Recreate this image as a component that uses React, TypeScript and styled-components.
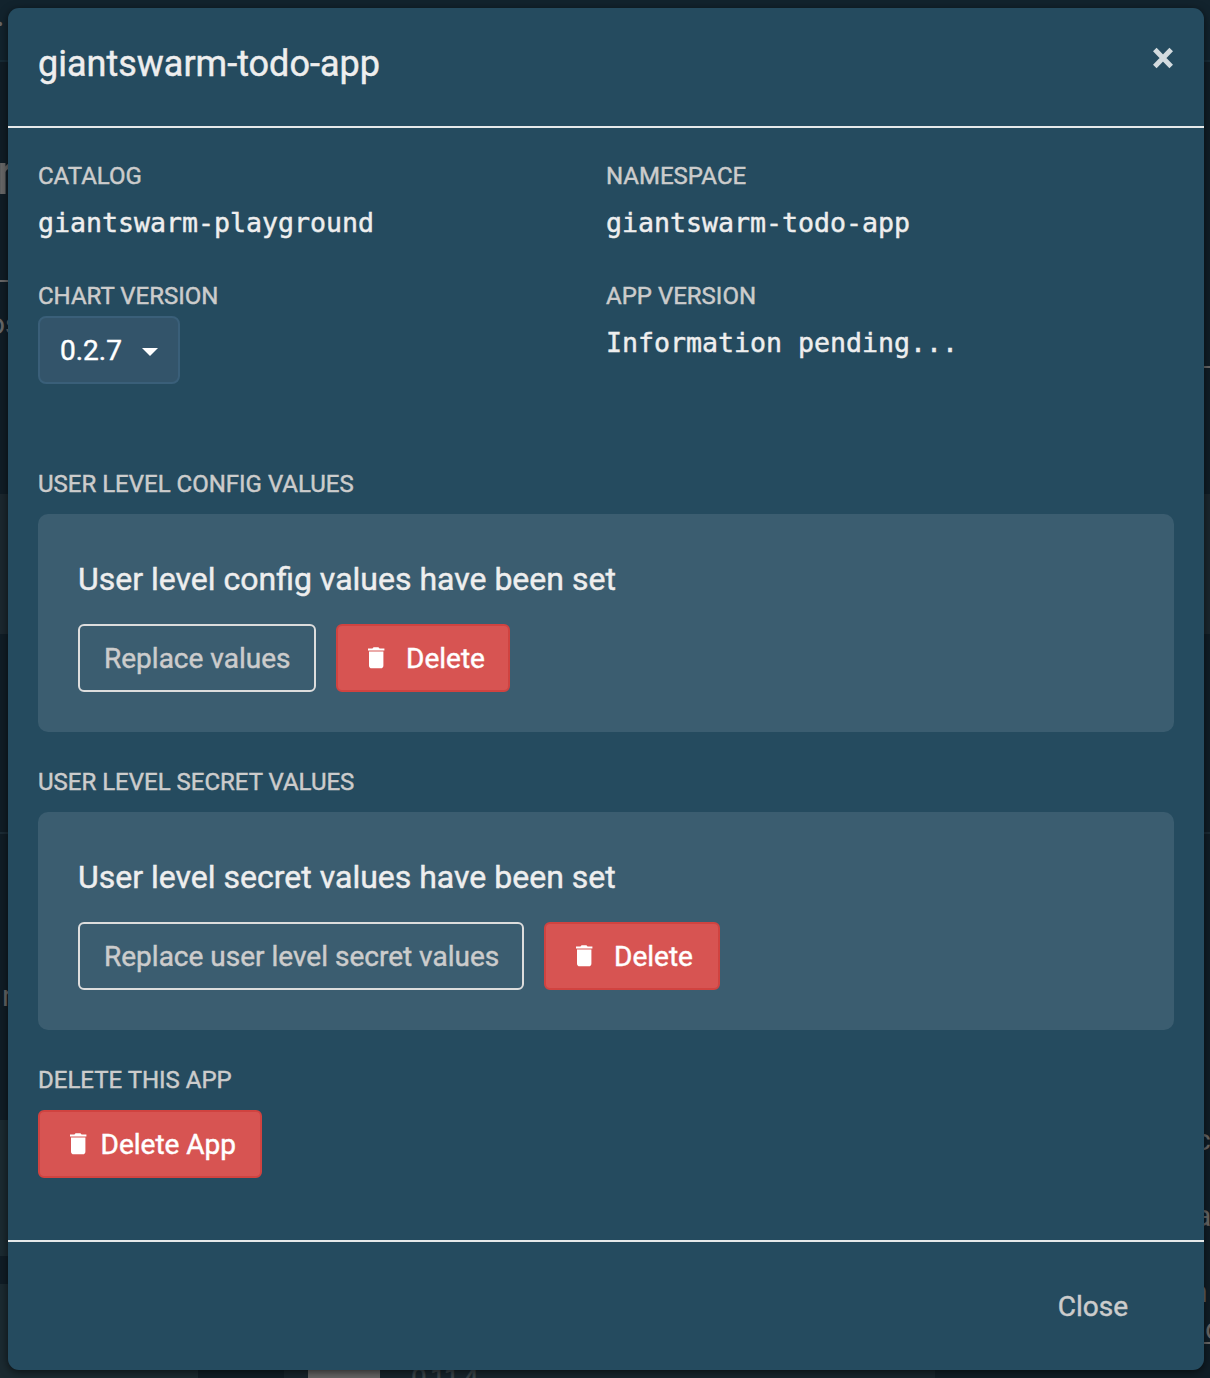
import React from "react";
import styled, { createGlobalStyle } from "styled-components";

const GlobalStyle = createGlobalStyle`
  *, *::before, *::after { box-sizing: border-box; }
  html, body { margin: 0; padding: 0; background: #101d26; }
  body {
    font-family: Roboto, "Liberation Sans", sans-serif;
    font-size: 28px;
    color: #eeeeee;
    overflow: hidden;
    -webkit-text-stroke: 0.45px currentColor;
  }
`;

const Screen = styled.div`
  position: relative;
  width: 1210px;
  height: 1378px;
  padding: 8px 6px 8px 8px;
  overflow: hidden;
`;

/* The dimmed page that stays visible around the dialog. */
const Backdrop = styled.div`
  position: absolute;
  inset: 0;
  display: flex;
  justify-content: space-between;
  background: linear-gradient(#12232d 0 60px, #172b36 60px 62px, #101d26 62px);
`;

const Gutter = styled.div`
  width: 12px;
  height: 1378px;
  overflow: hidden;
`;

const Strip = styled.div<{ $h: number; $bg?: string }>`
  height: ${(p) => p.$h}px;
  background: ${(p) => p.$bg ?? "transparent"};
`;

const Snippet = styled.div<{ $h: number; $size: number; $shift?: number; $underline?: boolean }>`
  height: ${(p) => p.$h}px;
  line-height: ${(p) => p.$h}px;
  font-size: ${(p) => p.$size}px;
  text-indent: ${(p) => p.$shift ?? 0}px;
  color: #686868;
  white-space: nowrap;
  -webkit-text-stroke: 0;
  border-bottom: ${(p) => (p.$underline ? "2px solid #686868" : "0")};
`;

const BottomRow = styled.div`
  position: absolute;
  left: 0;
  right: 0;
  bottom: 0;
  height: 22px;
  display: flex;
`;

const Block = styled.div<{ $w: number; $bg: string }>`
  width: ${(p) => p.$w}px;
  background: ${(p) => p.$bg};
`;

const VersionBlock = styled(Block)`
  padding: 7px 0 0 31px;
  overflow: hidden;
  font-size: 28px;
  line-height: 32px;
  letter-spacing: -2px;
  color: #3b454b;
`;

const Dialog = styled.section`
  position: relative;
  height: 1362px;
  display: flex;
  flex-direction: column;
  background: #254b5f;
  border-radius: 11px;
  box-shadow: 0 2px 8px rgba(0, 0, 0, 0.6);
`;

const Header = styled.header`
  height: 120px;
  padding: 30px 30px 0;
  display: flex;
  justify-content: space-between;
  align-items: flex-start;
  border-bottom: 2px solid #e6e9ea;
`;

const Title = styled.h1`
  margin: 0;
  font-size: 36px;
  line-height: 52px;
  font-weight: 400;
`;

const CloseIconButton = styled.button`
  margin: 9px 0 0;
  padding: 0;
  border: 0;
  background: none;
  display: flex;
  color: #d3dbdf;
`;

const Body = styled.main`
  flex: 1;
  padding: 30px 30px 0;
`;

const InfoGrid = styled.div`
  display: grid;
  grid-template-columns: 1fr 1fr;
  grid-template-rows: 120px 188px;
`;

const Label = styled.div`
  font-size: 24px;
  line-height: 36px;
  text-transform: uppercase;
  color: #cccccc;
`;

const Mono = styled.div`
  margin-top: 9px;
  font-family: "DejaVu Sans Mono", "Liberation Mono", monospace;
  font-size: 26.58px;
  line-height: 40px;
`;

const VersionPicker = styled.button`
  width: 142px;
  height: 68px;
  margin-top: 2px;
  padding: 0 20px;
  display: flex;
  align-items: center;
  justify-content: space-between;
  border: 2px solid #3a5f79;
  border-radius: 8px;
  background: #33546a;
  font: inherit;
  color: #ffffff;
`;

const Caret = styled.span`
  margin-top: 3px;
  border: 8px solid transparent;
  border-top-color: #ffffff;
  border-bottom: 0;
`;

const Panel = styled.div`
  height: 218px;
  margin: 12px 0 32px;
  padding: 42px 40px 0;
  border-radius: 10px;
  background: #3b5d70;
`;

const PanelText = styled.p`
  margin: 0 0 22px;
  font-size: 32px;
  line-height: 46px;
`;

const ButtonRow = styled.div`
  display: flex;
  gap: 20px;
`;

const Button = styled.button<{ $w: number }>`
  width: ${(p) => p.$w}px;
  height: 68px;
  padding: 0 0 0 24px;
  display: flex;
  align-items: center;
  border-radius: 6px;
  border: 2px solid #dddddd;
  background: transparent;
  font: inherit;
  white-space: nowrap;
  color: #cccccc;
`;

const DangerButton = styled(Button)<{ $gap: number }>`
  padding-left: 26px;
  gap: ${(p) => p.$gap}px;
  border-color: #d04340;
  background: #d75452;
  color: #ffffff;
`;

const DeleteAppRow = styled.div`
  margin-top: 12px;
`;

const Footer = styled.footer`
  height: 130px;
  padding: 0 76px 0 0;
  display: flex;
  align-items: center;
  justify-content: flex-end;
  border-top: 2px solid #e6e9ea;
`;

const TextButton = styled.button`
  padding: 0;
  border: 0;
  background: none;
  font: inherit;
  color: #cccccc;
`;

function TrashIcon() {
  return (
    <svg width="24" height="24" viewBox="0 0 24 24" fill="currentColor">
      <path d="M4 2.4h4.4L9.6 1.2h4.8l1.2 1.2H20.4V4.6H4zM5 5.6h14.4V19.4a2.8 2.8 0 0 1-2.8 2.8H7.8A2.8 2.8 0 0 1 5 19.4z" />
    </svg>
  );
}

function CloseIcon() {
  return (
    <svg width="22" height="22" viewBox="0 0 22 22" fill="none" stroke="currentColor" strokeWidth="5" strokeLinejoin="round">
      <path d="M2.8 2.6L19.2 19.4M19.2 2.6L2.8 19.4" />
    </svg>
  );
}

function PageBehind() {
  return (
    <>
      <Backdrop>
        <Gutter>
          <Strip $h={9} />
          <Snippet $h={32} $size={38} $shift={-5}>·</Snippet>
          <Strip $h={104} />
          <Snippet $h={58} $size={60} $shift={-4}>r</Snippet>
          <Strip $h={77} />
          <Strip $h={2} $bg="#686868" />
          <Strip $h={26} />
          <Snippet $h={32} $size={30} $shift={-12}>os</Snippet>
          <Strip $h={154} />
          <Strip $h={140} $bg="#1b272e" />
          <Strip $h={198} />
          <Strip $h={2} $bg="#1b2b35" />
          <Strip $h={144} />
          <Snippet $h={36} $size={30} $shift={2}>r</Snippet>
          <Strip $h={106} />
          <Strip $h={136} $bg="#1b2a31" />
          <Strip $h={28} />
          <Strip $h={94} $bg="#1b2a31" />
        </Gutter>
        <Gutter>
          <Strip $h={366} />
          <Strip $h={2} $bg="#686868" />
          <Strip $h={126} />
          <Strip $h={140} $bg="#1b272e" />
          <Strip $h={198} />
          <Strip $h={2} $bg="#1b2b35" />
          <Strip $h={288} />
          <Snippet $h={36} $size={30} $shift={-3}>c</Snippet>
          <Strip $h={40} />
          <Snippet $h={36} $size={30} $shift={-3}>a</Snippet>
          <Strip $h={40} />
          <Snippet $h={36} $size={30} $shift={-7}>n</Snippet>
          <Strip $h={4} />
          <Snippet $h={30} $size={30} $shift={7} $underline>d</Snippet>
        </Gutter>
      </Backdrop>
      <BottomRow>
        <Block $w={198} $bg="#1b2a31" />
        <Block $w={86} $bg="#101d26" />
        <Block $w={24} $bg="#18252d" />
        <Block $w={72} $bg="#656565" />
        <VersionBlock $w={555} $bg="#18252d">0.11.4</VersionBlock>
      </BottomRow>
    </>
  );
}

export default function App() {
  return (
    <Screen>
      <GlobalStyle />
      <PageBehind />
      <Dialog role="dialog" aria-label="giantswarm-todo-app">
        <Header>
          <Title>giantswarm-todo-app</Title>
          <CloseIconButton aria-label="Dismiss">
            <CloseIcon />
          </CloseIconButton>
        </Header>
        <Body>
          <InfoGrid>
            <div>
              <Label>Catalog</Label>
              <Mono>giantswarm-playground</Mono>
            </div>
            <div>
              <Label>Namespace</Label>
              <Mono>giantswarm-todo-app</Mono>
            </div>
            <div>
              <Label>Chart version</Label>
              <VersionPicker>
                0.2.7
                <Caret />
              </VersionPicker>
            </div>
            <div>
              <Label>App version</Label>
              <Mono>Information pending...</Mono>
            </div>
          </InfoGrid>

          <Label>User level config values</Label>
          <Panel>
            <PanelText>User level config values have been set</PanelText>
            <ButtonRow>
              <Button $w={238}>Replace values</Button>
              <DangerButton $w={174} $gap={18}>
                <TrashIcon />
                Delete
              </DangerButton>
            </ButtonRow>
          </Panel>

          <Label>User level secret values</Label>
          <Panel>
            <PanelText>User level secret values have been set</PanelText>
            <ButtonRow>
              <Button $w={446}>Replace user level secret values</Button>
              <DangerButton $w={176} $gap={18}>
                <TrashIcon />
                Delete
              </DangerButton>
            </ButtonRow>
          </Panel>

          <Label>Delete this app</Label>
          <DeleteAppRow>
            <DangerButton $w={224} $gap={10.5}>
              <TrashIcon />
              Delete App
            </DangerButton>
          </DeleteAppRow>
        </Body>
        <Footer>
          <TextButton>Close</TextButton>
        </Footer>
      </Dialog>
    </Screen>
  );
}
